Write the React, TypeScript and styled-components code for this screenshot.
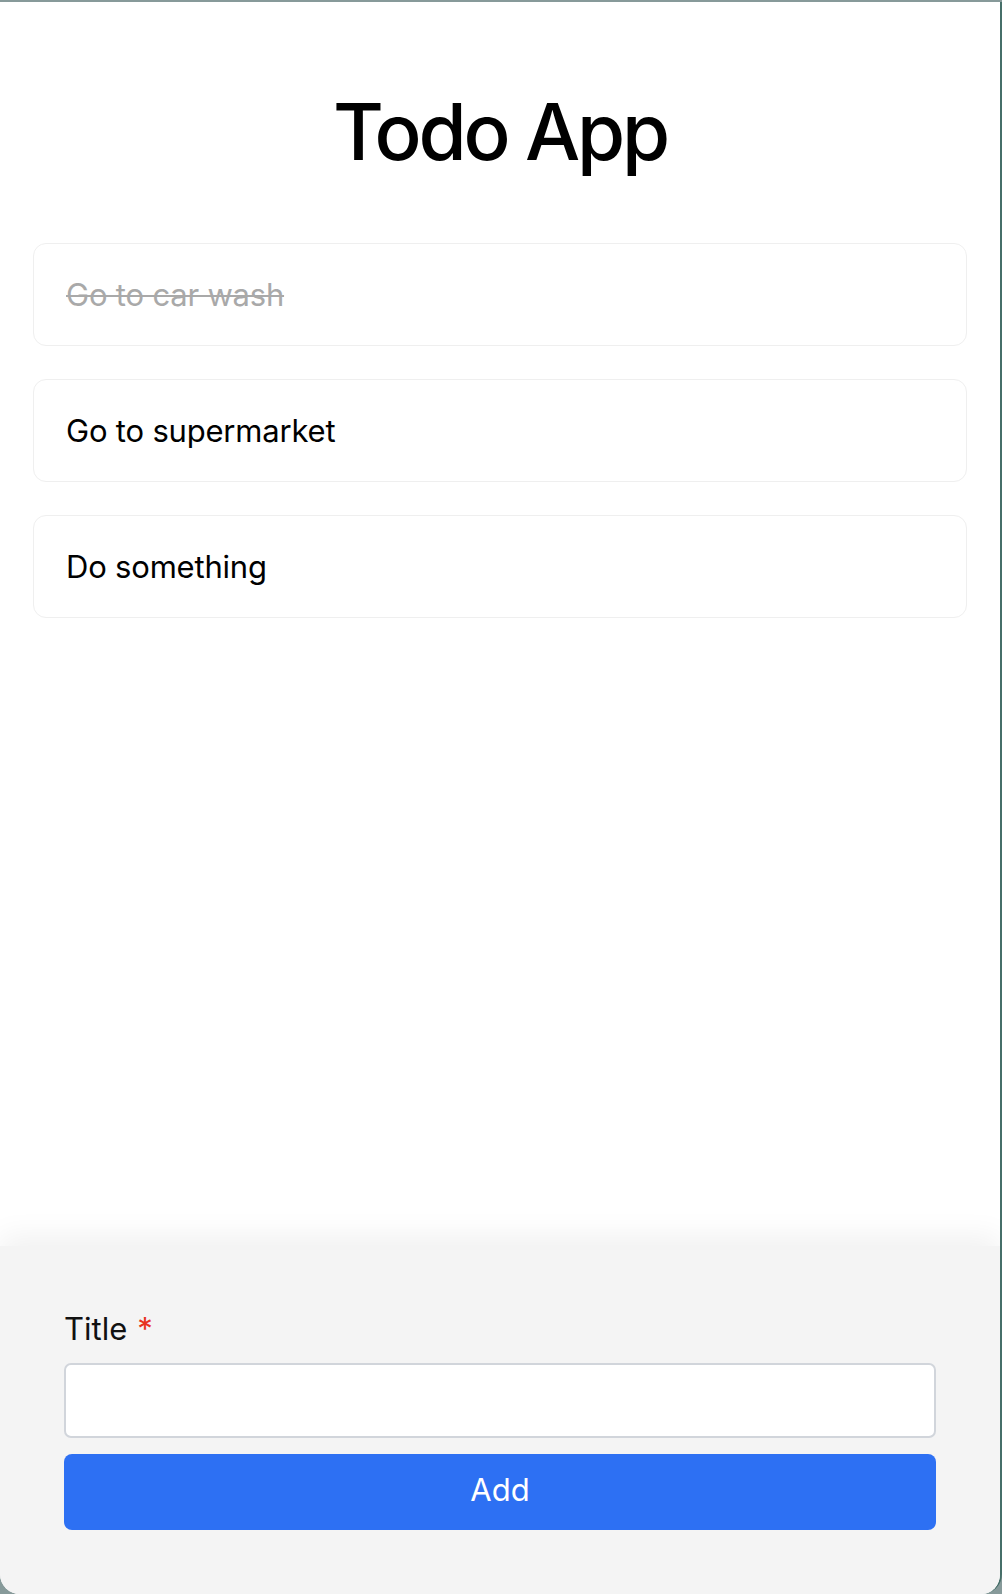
import React from "react";
import styled, { createGlobalStyle } from "styled-components";

const Global = createGlobalStyle`
  html, body { margin: 0; padding: 0; }
  body {
    background: linear-gradient(90deg, #3a3a32 0%, #3a3a32 50%, #1a1a1a 100%);
    font-family: Inter, "Noto Sans", "Liberation Sans", sans-serif;
    -webkit-font-smoothing: antialiased;
  }
  * { box-sizing: border-box; }
`;

const Desktop = styled.div`
  height: 1594px;
  display: flex;
  flex-direction: column;
  background: #879a9a;
  padding-top: 2px;
`;

const Window = styled.div`
  flex: 1;
  display: flex;
  flex-direction: column;
  background: #ffffff;
  border-right: 2px solid #466f69;
  border-bottom-left-radius: 20px;
  border-bottom-right-radius: 20px;
  overflow: hidden;
  position: relative;
`;

const Main = styled.main`
  flex: 1;
  padding: 82px 33px 0;
  display: flex;
  flex-direction: column;
`;

const Heading = styled.h1`
  margin: 0 0 63px;
  font-size: 78px;
  line-height: 96px;
  font-weight: 500;
  text-align: center;
  color: #000;
  letter-spacing: -3.2px;
`;

const List = styled.ul`
  list-style: none;
  margin: 0;
  padding: 0;
  display: flex;
  flex-direction: column;
  gap: 33px;
`;

const Item = styled.li<{ $done?: boolean }>`
  height: 103px;
  display: flex;
  align-items: center;
  padding: 0 32px;
  border: 1.5px solid #efefef;
  border-radius: 13px;
  font-size: 31px;
  letter-spacing: -0.2px;
  color: ${(p) => (p.$done ? "#a9a9a9" : "#000")};
  text-decoration: ${(p) => (p.$done ? "line-through" : "none")};
  text-decoration-thickness: 2px;
`;

const Panel = styled.form`
  background: #f4f4f4;
  padding: 64px 64px 62px;
  display: flex;
  flex-direction: column;
  box-shadow: 0 -10px 28px rgba(0, 0, 0, 0.06);
  height: 348px;
`;

const Label = styled.label`
  font-size: 31px;
  line-height: 38px;
  color: #111;
  margin-bottom: 15px;
`;

const Required = styled.span`
  color: #e8321f;
  margin-left: 10px;
`;

const Input = styled.input`
  height: 75px;
  width: 100%;
  border: 2px solid #d1d5db;
  border-radius: 7px;
  background: #fff;
  font-size: 31px;
  padding: 0 16px;
  margin-bottom: 16px;
  outline: none;
  font-family: inherit;
`;

const Button = styled.button`
  height: 76px;
  width: 100%;
  border: none;
  border-radius: 8px;
  background: #2d70f3;
  color: #fff;
  font-size: 31px;
  line-height: 72px;
  padding: 0 0 4px;
  font-family: inherit;
  cursor: pointer;
`;

const todos = [
  { title: "Go to car wash", done: true },
  { title: "Go to supermarket", done: false },
  { title: "Do something", done: false },
];

export default function App() {
  return (
    <>
      <Global />
      <Desktop>
        <Window>
          <Main>
            <Heading>Todo App</Heading>
            <List>
              {todos.map((t) => (
                <Item key={t.title} $done={t.done}>
                  {t.title}
                </Item>
              ))}
            </List>
          </Main>
          <Panel onSubmit={(e) => e.preventDefault()}>
            <Label>
              Title<Required>*</Required>
            </Label>
            <Input type="text" />
            <Button type="submit">Add</Button>
          </Panel>
        </Window>
      </Desktop>
    </>
  );
}
